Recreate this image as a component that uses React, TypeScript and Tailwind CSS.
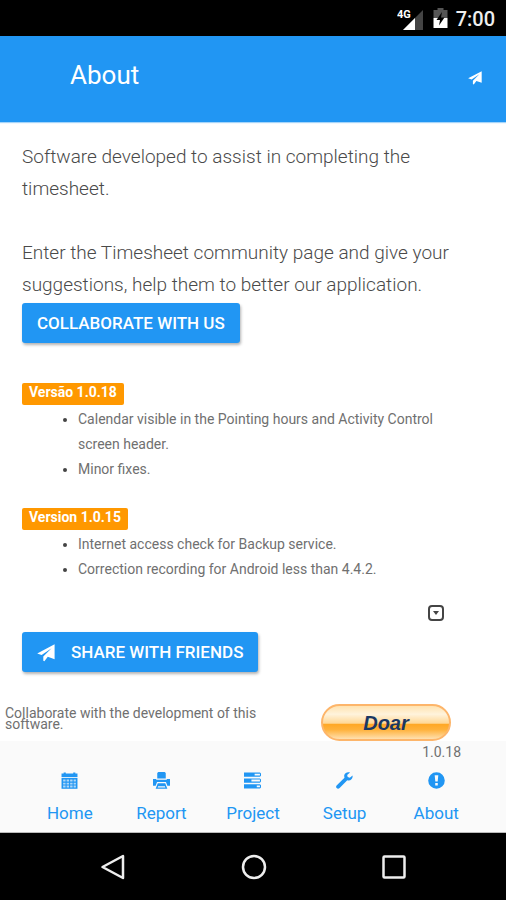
import type { ReactNode } from 'react'

interface Release {
  label: string
  notes: string[]
}

const releases: Release[] = [
  {
    label: 'Versão 1.0.18',
    notes: ['Calendar visible in the Pointing hours and Activity Control screen header.', 'Minor fixes.'],
  },
  {
    label: 'Version 1.0.15',
    notes: ['Internet access check for Backup service.', 'Correction recording for Android less than 4.4.2.'],
  },
]

function SendIcon({ className }: { className?: string }) {
  return (
    <svg viewBox="0 0 18 18" className={className} fill="currentColor" aria-hidden="true">
      <path d="M17.6 0.2 17.6 15.2 10.8 12.7 7.4 17.2 6.3 16.8 6.3 12.4 14.6 4.2 4.6 11 0.2 9.4Z" />
    </svg>
  )
}

const tabs: { label: string; icon: ReactNode }[] = [
  {
    label: 'Home',
    icon: (
      <>
        <path d="M.5 1.500h2V.4h2v1.100h7V.4h2v1.100h2v3.300H.5z" />
        <path d="M.5 5.500h15v10.300H.5z" />
        <path
          d="M2 7h2.300v2H2zM5.300 7h2.300v2H5.300zM8.600 7h2.300v2H8.600zM11.900 7H14v2h-2.100zM2 10h2.300v1.800H2zM5.300 10h2.300v1.800H5.300zM8.600 10h2.300v1.800H8.600zM11.900 10H14v1.800h-2.100zM2 12.800h2.300v1.700H2zM5.300 12.800h2.300v1.700H5.300zM8.600 12.800h2.300v1.700H8.600zM11.900 12.800H14v1.700h-2.100z"
          fill="#fafafa"
          fillOpacity="0.65"
        />
      </>
    ),
  },
  {
    label: 'Report',
    icon: (
      <>
        <path d="M5 0h6l1 1v5H4V1z" />
        <path d="M0 6.500h3v.8h10v-.8h3V13h-2.500l-1.300-3.500H3.800L2.500 13H0z" />
        <path d="M4.500 10.500h7l2 5.300h-11zM4.800 13.500l-.4 1h7.200l-.4-1z" fillRule="evenodd" />
      </>
    ),
  },
  {
    label: 'Project',
    icon: (
      <path
        fillRule="evenodd"
        d="M0 .5h15l1 1v2l-1 1H0zM10 1.600v1.800h5V1.600zM0 6h15l1 1v2l-1 1H0zM7 7.100v1.800h8V7.100zM0 11.500h15l1 1v2l-1 1H0zM12 12.600v1.800h3v-1.800z"
      />
    ),
  },
  {
    label: 'Setup',
    icon: (
      <path d="M15.600 3.300 13 5.300l-2-.5-.5-1.900L13.200.5C11-.4 8.600.6 7.900 2.700c-.3.900-.2 1.800.1 2.600L.8 12.500c-.9.900-.9 1.800-.2 2.600.8.900 1.900.9 2.800 0l7.200-7.300c2.600 1 5.500-1.100 5-4.500z" />
    ),
  },
  {
    label: 'About',
    icon: (
      <path
        fillRule="evenodd"
        d="M8 .2a7.800 7.800 0 1 1 0 15.600A7.800 7.800 0 0 1 8 .2zM6.300 3l.6 6h2.200l.6-6zM6.800 10.300v2.500h2.400v-2.500z"
      />
    ),
  },
]

function StatusBar() {
  return (
    <div className="flex h-9 items-center justify-end bg-black pr-[11px] text-[#eee]">
      <svg viewBox="0 0 28 24" className="h-6 w-7" aria-hidden="true">
        <path d="M26 4v20H6z" fill="#444" />
        <path d="M18 12V24H6z" fill="#fff" />
        <text x="0" y="12" fontSize="11" fontWeight="700" fill="#fff" fontFamily="Roboto, sans-serif">
          4G
        </text>
      </svg>
      <svg viewBox="0 0 14 20" className="ml-2 h-5 w-[15px]" aria-hidden="true">
        <path d="M4 0h6v2h4v8H0V2h4z" fill="#555" />
        <path d="M0 10h14v10H0z" fill="#fff" />
        <path d="M8.500 4 3 12h3.500L5.500 17.500 11 9.500H7.500z" fill="#000" />
      </svg>
      <span className="ml-2 pt-[2px] text-xl font-medium leading-9">7:00</span>
    </div>
  )
}

function ReleaseNotes({ release }: { release: Release }) {
  return (
    <section>
      <h2 className="w-fit rounded-xs bg-[#ff9800] px-[7px] pb-1 text-sm font-bold leading-[18px] text-white">
        {release.label}
      </h2>
      <ul className="mt-[2px] list-disc pl-14 pr-5 text-sm leading-[25px] text-[#707070] marker:text-[#444]">
        {release.notes.map((note) => (
          <li key={note}>{note}</li>
        ))}
      </ul>
    </section>
  )
}

export default function App() {
  return (
    <div className="flex min-h-screen flex-col bg-white font-[Roboto,sans-serif] text-[#707070]">
      <StatusBar />

      <header className="flex h-[86px] items-start justify-between bg-[#2196f3] pl-[70px] pr-6 text-white shadow-[0_1px_1px_rgba(33,150,243,0.4)]">
        <h1 className="pt-[21px] text-[26px] leading-9">About</h1>
        <button aria-label="Share" className="mt-[35px]">
          <SendIcon className="size-[14px]" />
        </button>
      </header>

      <main className="flex grow flex-col">
        <div className="px-[22px] pt-[19px]">
          <p className="text-[19px] font-light leading-8 text-[#4a4a4a]">
            Software developed to assist in completing the timesheet.
          </p>
          <p className="mt-8 text-[19px] font-light leading-8 text-[#4a4a4a]">
            Enter the Timesheet community page and give your suggestions, help them to better our application.
          </p>
          <button className="mt-[2px] h-10 rounded-[3px] bg-[#2196f3] px-[15px] pt-[2px] text-[17px] font-medium text-white shadow-[1px_2px_3px_rgba(0,0,0,0.3)]">
            COLLABORATE WITH US
          </button>

          <div className="mt-10 flex flex-col gap-[26px]">
            {releases.map((release) => (
              <ReleaseNotes key={release.label} release={release} />
            ))}
          </div>

          <div className="mt-[23px] flex justify-end pr-10">
            <button aria-label="Show more versions">
              <svg viewBox="0 0 16 16" className="size-4" aria-hidden="true">
                <rect x="1" y="1" width="14" height="14" rx="3" fill="none" stroke="#444" strokeWidth="2" />
                <path d="M5 6h6l-3 4z" fill="#444" />
              </svg>
            </button>
          </div>

          <button className="mt-[11px] flex h-10 items-center gap-4 rounded-[3px] bg-[#2196f3] px-[15px] pt-[2px] text-[17px] font-medium text-white shadow-[1px_2px_3px_rgba(0,0,0,0.3)]">
            <SendIcon className="size-[18px]" />
            SHARE WITH FRIENDS
          </button>
        </div>

        <div className="mt-8 flex items-start justify-between pl-[5px] pr-[55px]">
          <p className="w-[270px] pt-1 text-sm leading-[11px]">Collaborate with the development of this software.</p>
          <button className="h-[37px] w-[130px] rounded-full border-2 border-[#fdb56a] bg-[linear-gradient(#ffe3b0,#fff3dc_25%,#ffd896_52%,#ffa826_56%,#ffb23c_72%,#ffe0b0)] font-['Liberation_Sans',sans-serif] text-xl font-bold italic text-[#1a3763]">
            Doar
          </button>
        </div>
      </main>

      <footer className="bg-[#fafafa]">
        <p className="pr-[45px] pt-[2px] text-right text-sm leading-[18px]">1.0.18</p>
        <nav className="grid grid-cols-5 border-b border-[#bbb] px-6 pb-[7px] pt-[11px]">
          {tabs.map((tab) => (
            <a key={tab.label} href="#" className="flex flex-col items-center gap-3 text-[17px] leading-6 text-[#2196f3]">
              <svg viewBox="0 0 16 16" className="size-[17px]" fill="currentColor" aria-hidden="true">
                {tab.icon}
              </svg>
              {tab.label}
            </a>
          ))}
        </nav>
      </footer>

      <div className="flex h-[67px] items-center justify-between bg-black px-[100px]">
        <button aria-label="Back">
          <svg viewBox="0 0 26 28" className="h-7 w-[26px]" fill="none" stroke="#eee" strokeWidth="2.500">
            <path d="M23 3v22L2.500 14z" strokeLinejoin="round" />
          </svg>
        </button>
        <button aria-label="Home">
          <svg viewBox="0 0 26 26" className="size-[26px]" fill="none" stroke="#eee" strokeWidth="2.500">
            <circle cx="13" cy="13" r="11" />
          </svg>
        </button>
        <button aria-label="Recent apps">
          <svg viewBox="0 0 24 24" className="size-6" fill="none" stroke="#eee" strokeWidth="2.500">
            <rect x="1.500" y="1.500" width="21" height="21" rx="1" />
          </svg>
        </button>
      </div>
    </div>
  )
}
